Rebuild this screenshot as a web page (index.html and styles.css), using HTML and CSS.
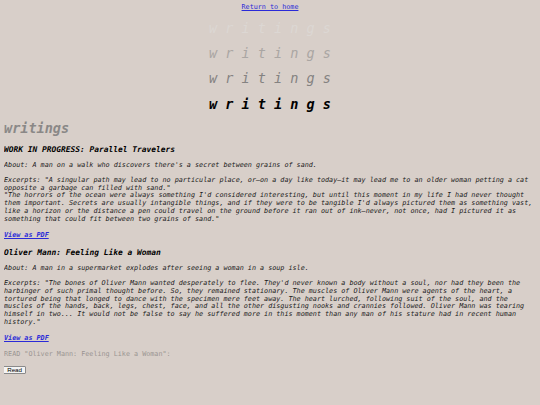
FILE: index.html
```html
<!DOCTYPE html>
<html lang="en">
<head>
<meta charset="utf-8">
<title>writings</title>
<link rel="stylesheet" href="styles.css">
</head>
<body>
<nav class="top-nav"><a href="#">Return to home</a></nav>
<header class="titles">
  <h1 class="title title-faint">w r i t i n g s</h1>
  <h1 class="title title-light">w r i t i n g s</h1>
  <h1 class="title title-mid">w r i t i n g s</h1>
  <h1 class="title title-dark">w r i t i n g s</h1>
</header>
<h1 class="page-title">writings</h1>
<section class="work work-first">
  <h3 class="work-title">WORK IN PROGRESS: Parallel Travelers</h3>
  <p class="about">About: A man on a walk who discovers there's a secret between grains of sand.</p>
  <p class="excerpt">Excerpts: "A singular path may lead to no particular place, or—on a day like today—it may lead me to an older woman petting a cat opposite a garbage can filled with sand."<br>"The horrors of the ocean were always something I'd considered interesting, but until this moment in my life I had never thought them important. Secrets are usually intangible things, and if they were to be tangible I'd always pictured them as something vast, like a horizon or the distance a pen could travel on the ground before it ran out of ink—never, not once, had I pictured it as something that could fit between two grains of sand."</p>
  <h4 class="pdf"><a href="#">View as PDF</a></h4>
</section>
<section class="work">
  <h3 class="work-title">Oliver Mann: Feeling Like a Woman</h3>
  <p class="about">About: A man in a supermarket explodes after seeing a woman in a soup isle.</p>
  <p class="excerpt">Excerpts: "The bones of Oliver Mann wanted desperately to flee. They'd never known a body without a soul, nor had they been the harbinger of such primal thought before. So, they remained stationary. The muscles of Oliver Mann were agents of the heart, a tortured being that longed to dance with the specimen mere feet away. The heart lurched, following suit of the soul, and the muscles of the hands, back, legs, chest, face, and all the other disgusting nooks and crannies followed. Oliver Mann was tearing himself in two... It would not be false to say he suffered more in this moment than any man of his stature had in recent human history."</p>
  <h4 class="pdf"><a href="#">View as PDF</a></h4>
</section>
<p class="read-label">READ "Oliver Mann: Feeling Like a Woman":</p>
<button class="read-btn" type="button">Read</button>
</body>
</html>
```
FILE: styles.css
```css
html {
  background: #d8cfc9;
}
body {
  margin: 4px;
  font-family: "DejaVu Sans Mono", monospace;
  font-size: 6.75px;
  line-height: 7.8px;
  color: #1a1a1a;
}
h1, h3, h4, p {
  margin: 0;
}
a {
  color: #2a2ad8;
}
.top-nav {
  text-align: center;
}
.titles {
  margin-top: 8.2px;
  display: flex;
  flex-direction: column;
  gap: 9.2px;
}
.title {
  text-align: center;
  font-size: 13.5px;
  line-height: 16px;
  font-style: italic;
  font-weight: normal;
  white-space: pre;
}
.title-faint { color: #dcd7d3; }
.title-light { color: #aaa6a3; }
.title-mid { color: #848281; }
.title-dark { color: #000; font-weight: bold; }
.page-title {
  margin-top: 8.4px;
  font-size: 13.5px;
  line-height: 16px;
  font-style: italic;
  font-weight: bold;
  color: #8a8887;
}
.work-title {
  margin-top: 8.4px;
  font-size: 7.9px;
  line-height: 9.2px;
  font-style: italic;
  font-weight: bold;
  color: #000;
}
.work-first .work-title {
  margin-top: 9.4px;
}
.about {
  margin-top: 7.7px;
  font-style: italic;
}
.excerpt {
  margin-top: 6.8px;
  font-style: italic;
}
.pdf {
  margin-top: 8.7px;
  font-size: 6.75px;
  line-height: 7.8px;
  font-style: italic;
  font-weight: bold;
}
.read-label {
  margin-top: 7.5px;
  color: #9a9592;
}
.read-btn {
  display: block;
  margin-top: 7.6px;
  margin-left: -0.8px;
  padding: 0 3px;
  height: 8px;
  font-family: "Liberation Sans", Arial, sans-serif;
  font-size: 6.2px;
  line-height: 6px;
  color: #000;
  background: #f4f4f4;
  border: 0.6px solid #8a8a8a;
  border-radius: 1px;
}
```
